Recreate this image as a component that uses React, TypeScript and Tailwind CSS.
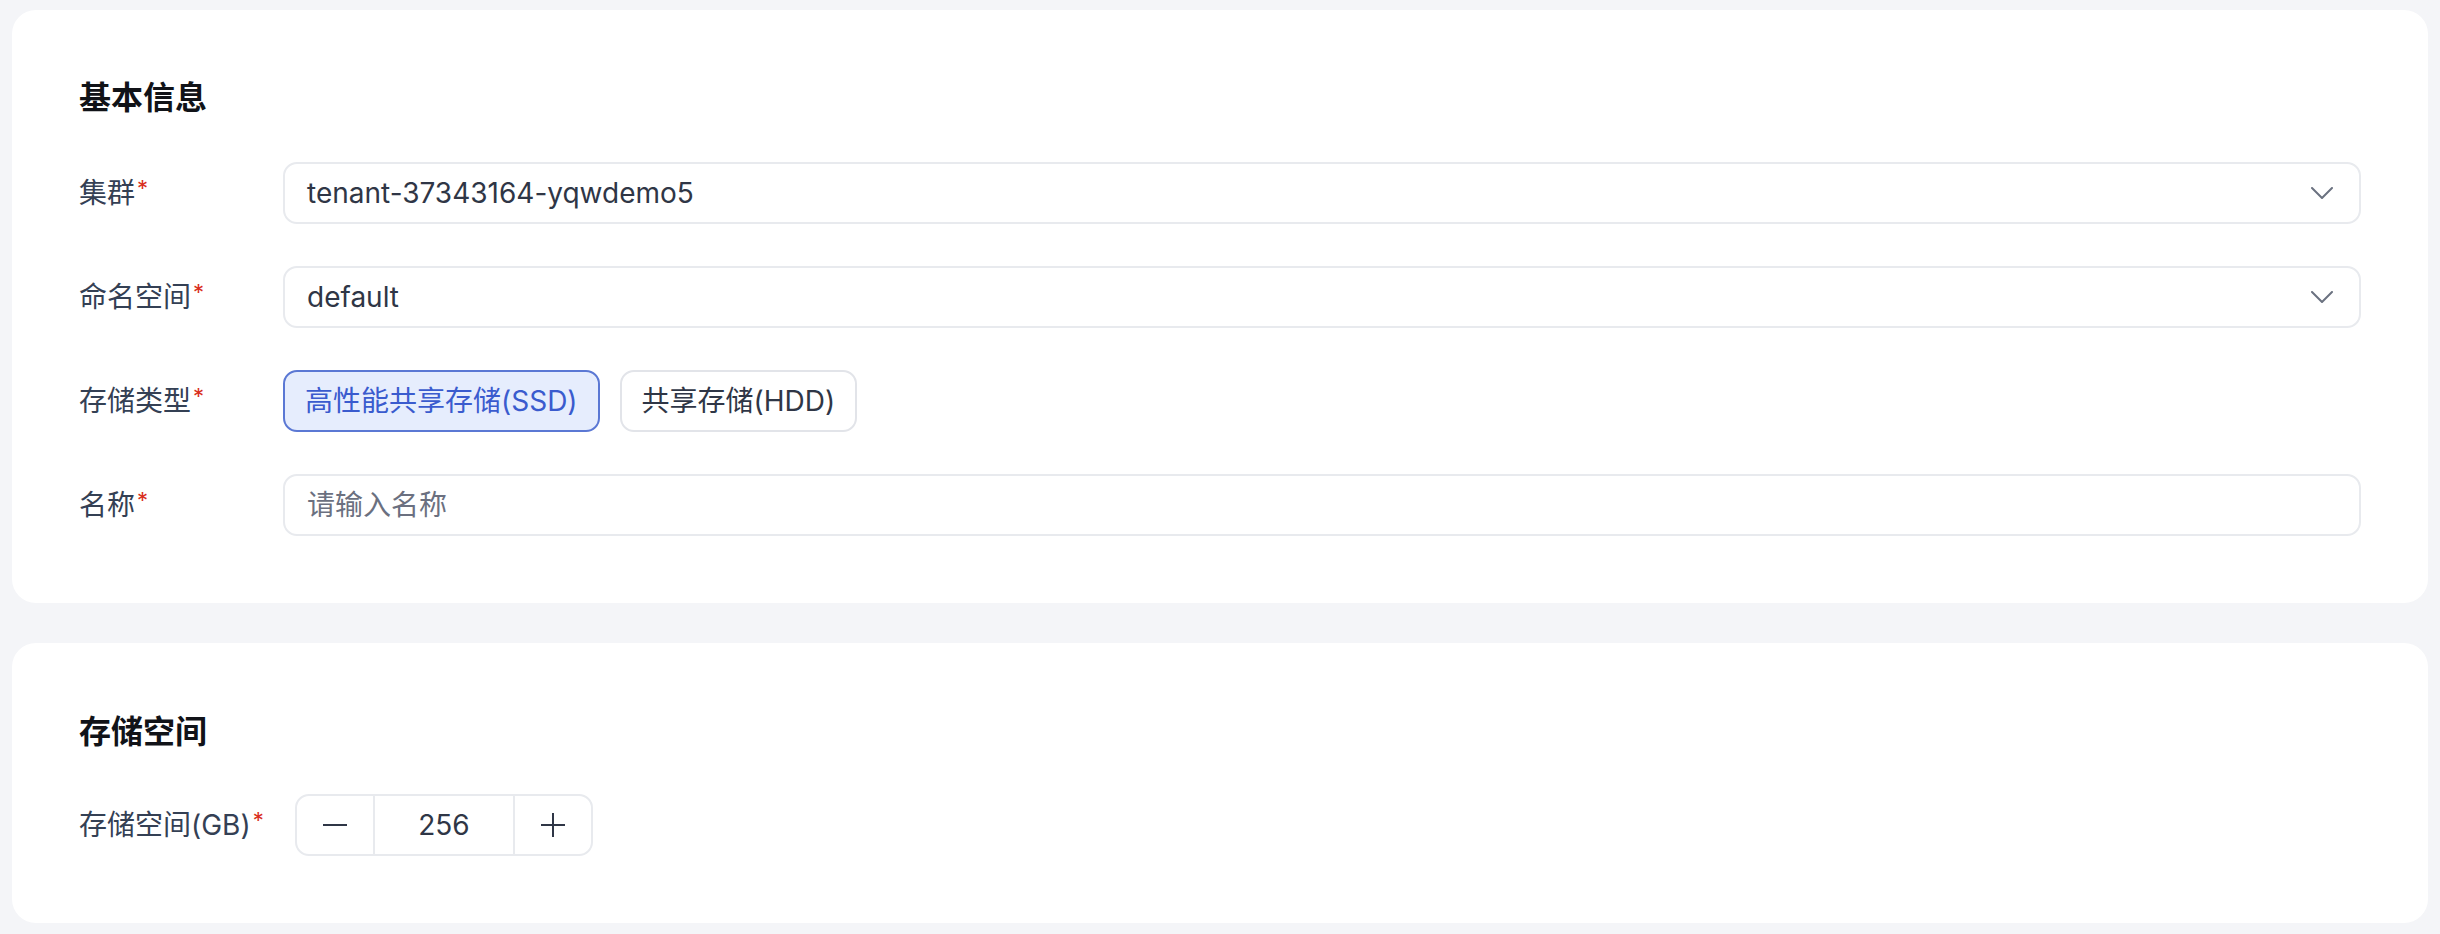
import React from 'react';

// ─── small drawings ─────────────────────────────────────────────────────────
function Chevron() {
  return (
    <svg width="22" height="12" viewBox="0 0 22 12" fill="none" className="shrink-0">
      <polyline points="1,1 11,11 21,1" stroke="#6b7280" strokeWidth="2" strokeLinecap="round" strokeLinejoin="round" />
    </svg>
  );
}

function MinusIcon() {
  return (
    <svg width="24" height="24" viewBox="0 0 24 24" fill="none">
      <line x1="0" y1="12" x2="24" y2="12" stroke="#2f3646" strokeWidth="2" />
    </svg>
  );
}

function PlusIcon() {
  return (
    <svg width="24" height="24" viewBox="0 0 24 24" fill="none">
      <line x1="0" y1="12" x2="24" y2="12" stroke="#2f3646" strokeWidth="2" />
      <line x1="12" y1="0" x2="12" y2="24" stroke="#2f3646" strokeWidth="2" />
    </svg>
  );
}

// ─── form bits ──────────────────────────────────────────────────────────────
function Label({ text, width = 'w-[204px]' }: { text: string; width?: string }) {
  return (
    <div className={`${width} shrink-0 flex items-start text-[28px] leading-[40px] text-[#344054]`}>
      <span>{text}</span>
      <span className="ml-[2px] text-[22px] leading-[30px] text-[#d92d20]">*</span>
    </div>
  );
}

function SelectBox({ value }: { value: string }) {
  return (
    <div className="flex-1 h-[62px] flex items-center justify-between rounded-[14px] border-2 border-[#e8eaee] bg-white pl-[22px] pr-[26px]">
      <span className="text-[28px] text-[#2f3646]">{value}</span>
      <Chevron />
    </div>
  );
}

function Card({ title, children, top = 'pt-[64px]', gap = 'mt-[40px]' }: { title: string; children: React.ReactNode; top?: string; gap?: string }) {
  return (
    <section className={`rounded-[24px] bg-white px-[67px] pb-[67px] ${top}`}>
      <h2 className="text-[32px] leading-[48px] font-semibold text-[#111318]">{title}</h2>
      <div className={`${gap} flex flex-col gap-[42px]`}>{children}</div>
    </section>
  );
}

// ─── page ───────────────────────────────────────────────────────────────────
export default function App() {
  const types = ['高性能共享存储(SSD)', '共享存储(HDD)'];
  const active = 0;

  return (
    <div className="min-h-screen bg-[#f4f5f8] px-[12px] pt-[10px] pb-[11px] flex flex-col gap-[40px] font-[Inter,'Noto_Sans_CJK_SC',sans-serif]">
      <Card title="基本信息">
        <div className="flex items-center">
          <Label text="集群" />
          <SelectBox value="tenant-37343164-yqwdemo5" />
        </div>
        <div className="flex items-center">
          <Label text="命名空间" />
          <SelectBox value="default" />
        </div>
        <div className="flex items-center">
          <Label text="存储类型" />
          <div className="flex gap-[20px]">
            {types.map((t, i) => (
              <button
                key={t}
                className={
                  i === active
                    ? 'h-[62px] px-[20px] rounded-[14px] border-2 border-[#5b78d4] bg-[#e6edfd] text-[28px] text-[#3a5bce]'
                    : 'h-[62px] px-[20px] rounded-[14px] border-2 border-[#e2e4e9] bg-white text-[28px] text-[#2f3646]'
                }
              >
                {t}
              </button>
            ))}
          </div>
        </div>
        <div className="flex items-center">
          <Label text="名称" />
          <input
            placeholder="请输入名称"
            className="flex-1 h-[62px] rounded-[14px] border-2 border-[#e8eaee] bg-white pl-[22px] text-[28px] text-[#2f3646] placeholder:text-[#6b7080] outline-none"
          />
        </div>
      </Card>

      <Card title="存储空间" top="pt-[65px]" gap="mt-[38px]">
        <div className="flex items-center">
          <Label text="存储空间(GB)" width="w-[216px]" />
          <div className="flex h-[62px] rounded-[14px] border-2 border-[#e8eaee] bg-white">
            <button className="w-[78px] flex items-center justify-center border-r-2 border-[#e8eaee]">
              <MinusIcon />
            </button>
            <div className="w-[138px] flex items-center justify-center text-[28px] text-[#2f3646]">256</div>
            <button className="w-[78px] flex items-center justify-center border-l-2 border-[#e8eaee]">
              <PlusIcon />
            </button>
          </div>
        </div>
      </Card>
    </div>
  );
}
